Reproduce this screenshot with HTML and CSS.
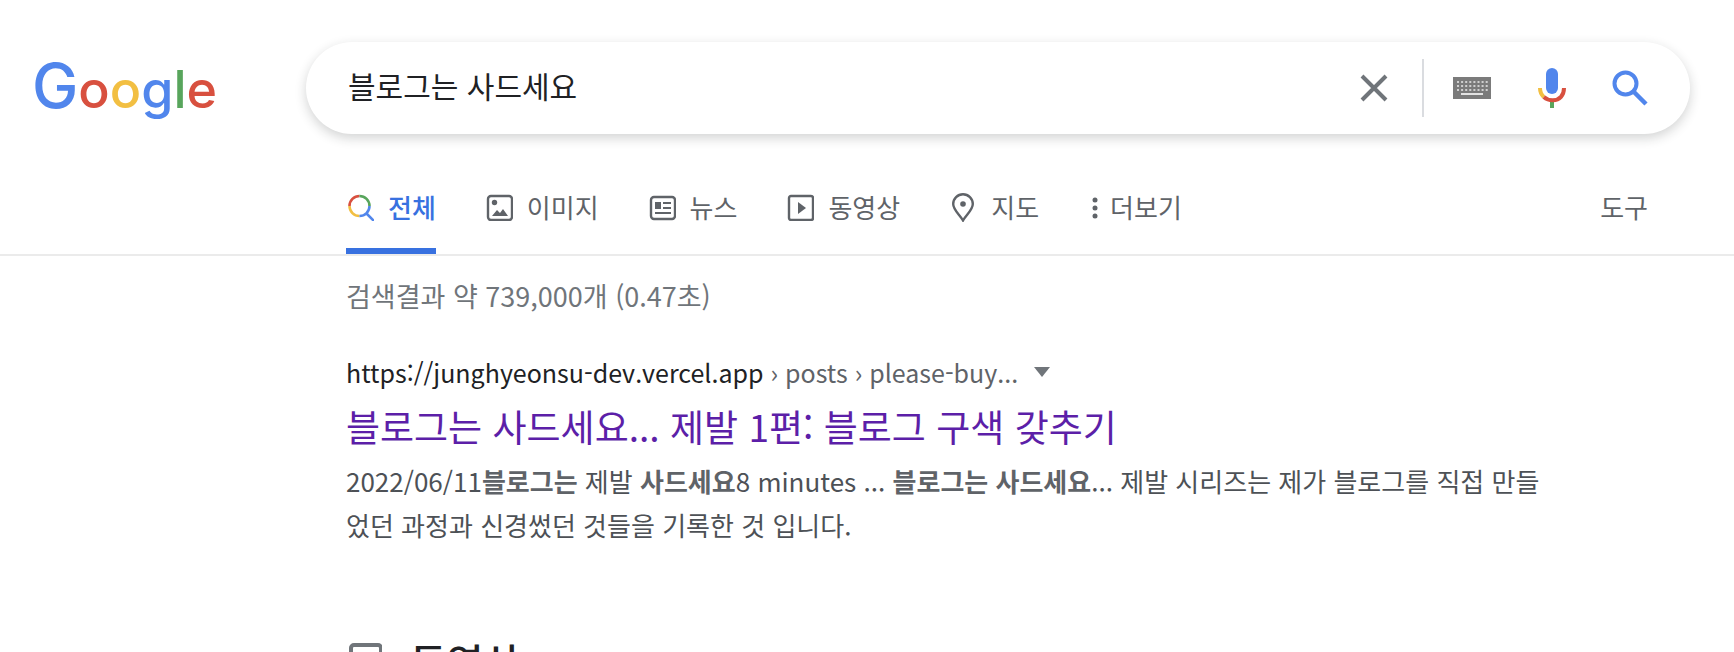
FILE: index.html
```html
<!DOCTYPE html>
<html lang="ko">
<head>
<meta charset="utf-8">
<title>블로그는 사드세요 - Google 검색</title>
<link rel="stylesheet" href="styles.css">
</head>
<body>
<header class="header">
  <a class="logo" href="#" aria-label="Google"><span class="logo-cap blue">G</span><span class="red">o</span><span class="yellow">o</span><span class="blue">g</span><span class="green">l</span><span class="red">e</span></a>
  <form class="search" role="search">
    <input class="search-input" type="text" aria-label="검색" value="블로그는 사드세요">
    <button class="icon-button clear" type="reset" aria-label="지우기">
      <svg width="28" height="28" viewBox="0 0 28 28"><path d="M2 2L26 26M26 2L2 26" fill="none" stroke="#70757a" stroke-width="4"/></svg>
    </button>
    <span class="divider"></span>
    <button class="icon-button" type="button" aria-label="입력 도구">
      <svg width="38" height="22" viewBox="0 0 38 22"><rect width="38" height="22" fill="#7b7b7b"/><path d="M4 5H35M4 9H35M4 13H35" stroke="#cfcfcf" stroke-width="2" stroke-dasharray="2 2.1"/><path d="M8 17H30" stroke="#e3e3e3" stroke-width="2"/></svg>
    </button>
    <button class="icon-button" type="button" aria-label="음성 검색">
      <svg width="28" height="40" viewBox="0 0 28 40"><rect x="8" width="12" height="26" rx="6" fill="#5186ec"/><path d="M12 33H16V40H12Z" fill="#58a55c"/><path d="M2 20C2 24 3.200 26.500 5.800 29" fill="none" stroke="#f2bf42" stroke-width="4"/><path d="M5.800 29C11 33.500 19 33.200 23 28.800C25 26.500 26 24 26 20" fill="none" stroke="#d8503f" stroke-width="4"/></svg>
    </button>
    <button class="icon-button" type="submit" aria-label="Google 검색">
      <svg width="40" height="36" viewBox="0 0 40 36"><circle cx="13.500" cy="13.500" r="11" fill="none" stroke="#5186ec" stroke-width="4"/><path d="M22 22L34 34" stroke="#5186ec" stroke-width="4.500"/></svg>
    </button>
  </form>
</header>

<nav class="tabs">
  <a class="tab active" href="#">
    <svg width="28" height="28" viewBox="0 0 28 28" fill="none" stroke-width="2.600"><path d="M3.500 13A10 10 0 0 1 13.500 3" stroke="#d8503f"/><path d="M13.500 3A10 10 0 0 1 23.500 13" stroke="#58a55c"/><path d="M3.500 13A10 10 0 0 0 13.500 23" stroke="#f2bf42"/><path d="M13.500 23A10 10 0 0 0 23.500 13M20 20L28 28" stroke="#5186ec"/></svg>
    <span>전체</span></a>
  <a class="tab" href="#">
    <svg width="28" height="28" viewBox="0 0 28 28"><rect x="3" y="3" width="24" height="24" rx="3" fill="none" stroke="#5f6368" stroke-width="2.400"/><circle cx="9.500" cy="9.500" r="2.700"/><path d="M7 23L12 17L15 20L18 16L23 23Z"/></svg>
    <span>이미지</span></a>
  <a class="tab" href="#">
    <svg width="28" height="28" viewBox="0 0 28 28"><rect x="3" y="4" width="24" height="22" rx="3" fill="none" stroke="#5f6368" stroke-width="2.400"/><path d="M7 9H13V16H7ZM15 9H23V11H15ZM15 14H23V16H15ZM7 19H23V21H7Z"/></svg>
    <span>뉴스</span></a>
  <a class="tab" href="#">
    <svg width="28" height="28" viewBox="0 0 28 28"><rect x="3" y="3" width="24" height="24" rx="2" fill="none" stroke="#5f6368" stroke-width="2.400"/><path d="M12 9L20 15L12 21Z"/></svg>
    <span>동영상</span></a>
  <a class="tab" href="#">
    <svg width="28" height="30" viewBox="0 0 28 30"><path d="M14 28.500C11 23 4.200 18 4.200 12A9.800 9.800 0 0 1 23.800 12C23.800 18 17 23 14 28.500Z" fill="none" stroke="#5f6368" stroke-width="2.400"/><circle cx="14" cy="12" r="2.800"/></svg>
    <span>지도</span></a>
  <button class="tab more" type="button">
    <svg width="12" height="28" viewBox="0 0 12 28"><circle cx="7" cy="7" r="2.500"/><circle cx="7" cy="15" r="2.500"/><circle cx="7" cy="23" r="2.500"/></svg>
    <span>더보기</span></button>
  <button class="tab tools" type="button">도구</button>
</nav>

<main class="content">
  <p class="stats">검색결과 약 739,000개 (0.47초)</p>
  <article class="result">
    <div class="source">
      <cite class="url">https://junghyeonsu-dev.vercel.app<span class="crumb"> › posts › please-buy...</span></cite>
      <button class="about" type="button" aria-label="결과 정보"><svg width="16" height="10" viewBox="0 0 16 10"><path d="M0 0H16L8 10Z" fill="#70757a"/></svg></button>
    </div>
    <h3 class="title"><a href="#">블로그는 사드세요... 제발 1편: 블로그 구색 갖추기</a></h3>
    <p class="snippet">2022/06/11<em>블로그는</em> 제발 <em>사드세요</em>8 minutes ... <em>블로그는 사드세요</em>... 제발 시리즈는 제가 블로그를 직접 만들었던 과정과 신경썼던 것들을 기록한 것 입니다.</p>
  </article>
  <h2 class="section">
    <svg width="36" height="36" viewBox="0 0 36 36"><rect x="5" y="2" width="30" height="32" rx="3" fill="none" stroke="#70757a" stroke-width="4"/><path d="M16 11L26 18L16 25Z" fill="#70757a"/></svg>
    <span>동영상</span>
  </h2>
</main>
</body>
</html>
```
FILE: styles.css
```css
* {
  box-sizing: border-box;
}

body {
  margin: 0;
  height: 100vh;
  overflow: hidden;
  background: #fff;
  color: #202124;
  font-family: "Noto Sans CJK KR", sans-serif;
  font-size: 26px;
}

a {
  color: inherit;
  text-decoration: none;
}

button {
  padding: 0;
  border: 0;
  background: none;
  color: inherit;
  font: inherit;
  cursor: pointer;
}

svg {
  display: block;
  flex: none;
}

h2, h3, p {
  margin: 0;
  font-weight: 400;
}

.header {
  display: flex;
  align-items: center;
  padding: 42px 44px 0 32px;
}

.logo {
  flex: none;
  width: 274px;
  font: 500 52px/80px Inter, sans-serif;
}

.logo-cap {
  font-size: 62px;
}

.blue { color: #5186ec; }
.red { color: #d8503f; }
.yellow { color: #f2bf42; }
.green { color: #58a55c; }

.search {
  display: flex;
  flex: 1;
  align-items: center;
  height: 92px;
  padding: 0 38px 0 42px;
  border-radius: 46px;
  background: #fff;
  box-shadow: 0 4px 12px rgba(32, 33, 36, 0.2);
}

.search-input {
  flex: 1;
  min-width: 0;
  height: 60px;
  padding: 0 0 6px;
  border: 0;
  outline: 0;
  background: none;
  color: #202124;
  font: inherit;
  font-size: 30px;
}

.icon-button {
  display: flex;
  flex: none;
  align-items: center;
  justify-content: center;
  width: 40px;
  height: 60px;
  margin-left: 40px;
}

.divider {
  flex: none;
  width: 2px;
  height: 58px;
  margin: 0 -12px 0 28px;
  background: #dadce0;
}

.tabs {
  display: flex;
  gap: 49px;
  margin-top: 54px;
  padding: 0 86px 0 346px;
  border-bottom: 2px solid #ebebeb;
  color: #5f6368;
  fill: #5f6368;
}

.tab {
  display: flex;
  flex: none;
  gap: 14px;
  align-items: center;
  padding-bottom: 22px;
  border-bottom: 6px solid transparent;
  line-height: 38px;
}

.active {
  border-color: #3871e0;
  color: #3871e0;
  font-weight: 500;
}

.more {
  gap: 10px;
}

.tools {
  margin-left: auto;
}

.content {
  padding: 22px 190px 0 346px;
}

.stats {
  color: #70757a;
  font-size: 27px;
  line-height: 36px;
}

.result {
  margin-top: 40px;
}

.source {
  display: flex;
  gap: 16px;
  align-items: center;
  line-height: 36px;
}

.url {
  font-size: 25px;
  font-style: normal;
}

.crumb {
  color: #5f6368;
}

.title {
  margin-top: 12px;
  color: #5c1fa8;
  font-size: 37px;
  line-height: 48px;
}

.snippet {
  margin-top: 9px;
  color: #4d5156;
  line-height: 44px;
}

.snippet em {
  color: #5f6368;
  font-style: normal;
  font-weight: 700;
}

.section {
  display: flex;
  gap: 28px;
  align-items: center;
  margin-top: 84px;
  font-size: 40px;
  font-weight: 500;
  line-height: 60px;
}
```
